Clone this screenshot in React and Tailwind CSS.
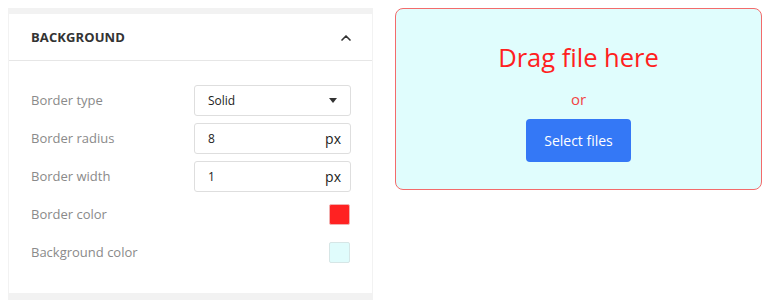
import { ChevronUp } from "lucide-react";

const rows = [
  { label: "Border type", kind: "select", value: "Solid" },
  { label: "Border radius", kind: "unit", value: "8" },
  { label: "Border width", kind: "unit", value: "1" },
  { label: "Border color", kind: "swatch", color: "bg-[#ff2222]", border: "border-[#f2b0b0]" },
  { label: "Background color", kind: "swatch", color: "bg-[#e0fcfc]", border: "border-[#d6e6e6]" },
];

function Control({ row }) {
  if (row.kind === "swatch") {
    return <div className={`w-[21px] h-[21px] mr-[1px] rounded-[2px] border ${row.border} ${row.color}`} />;
  }
  return (
    <div className="w-[157px] h-[31px] border border-[#dedede] rounded-[3px] bg-white flex items-center justify-between pl-[13px] pr-[9px] text-[12px] text-[#222]">
      <span>{row.value}</span>
      {row.kind === "select" ? (
        <svg width="8" height="5" viewBox="0 0 8 5" className="mr-[4px]">
          <path d="M0 0h8L4 5z" fill="#333" />
        </svg>
      ) : (
        <span className="text-[14px] text-[#222]">px</span>
      )}
    </div>
  );
}

export default function App() {
  return (
    <div className="w-[770px] h-[306px] bg-white flex items-start pl-[8px] pt-[8px] font-['Open_Sans',sans-serif]">
      <div className="w-[365px] h-[292px] bg-[#f2f2f2] pt-[6px] pb-[7px] px-px">
        <div className="h-full bg-white">
          <div className="h-[47px] pt-[2px] border-b border-[#e6e6e6] flex items-center justify-between pl-[22px] pr-[18px]">
            <span className="text-[13px] font-bold text-[#333] tracking-[0.1px]">BACKGROUND</span>
            <ChevronUp size={16} strokeWidth={2.5} className="text-[#333]" />
          </div>
          <div className="pt-[24px] pl-[22px] pr-[21px] flex flex-col gap-[7px]">
            {rows.map((row) => (
              <div key={row.label} className="h-[31px] flex items-center justify-between">
                <span className="text-[13px] text-[#8a8a8a]">{row.label}</span>
                <Control row={row} />
              </div>
            ))}
          </div>
        </div>
      </div>
      <div className="ml-[22px] w-[367px] h-[182px] border border-[#f36b6b] rounded-[8px] bg-[#e0fdfd] flex flex-col items-center pt-[30px]">
        <div className="text-[25.5px] leading-[36px] text-[#ff2020]">Drag file here</div>
        <div className="mt-[14px] text-[15px] leading-[20px] text-[#f24444]">or</div>
        <button className="mt-[10px] w-[105px] h-[43px] rounded-[4px] bg-[#3478f6] text-white text-[14px]">
          Select files
        </button>
      </div>
    </div>
  );
}
